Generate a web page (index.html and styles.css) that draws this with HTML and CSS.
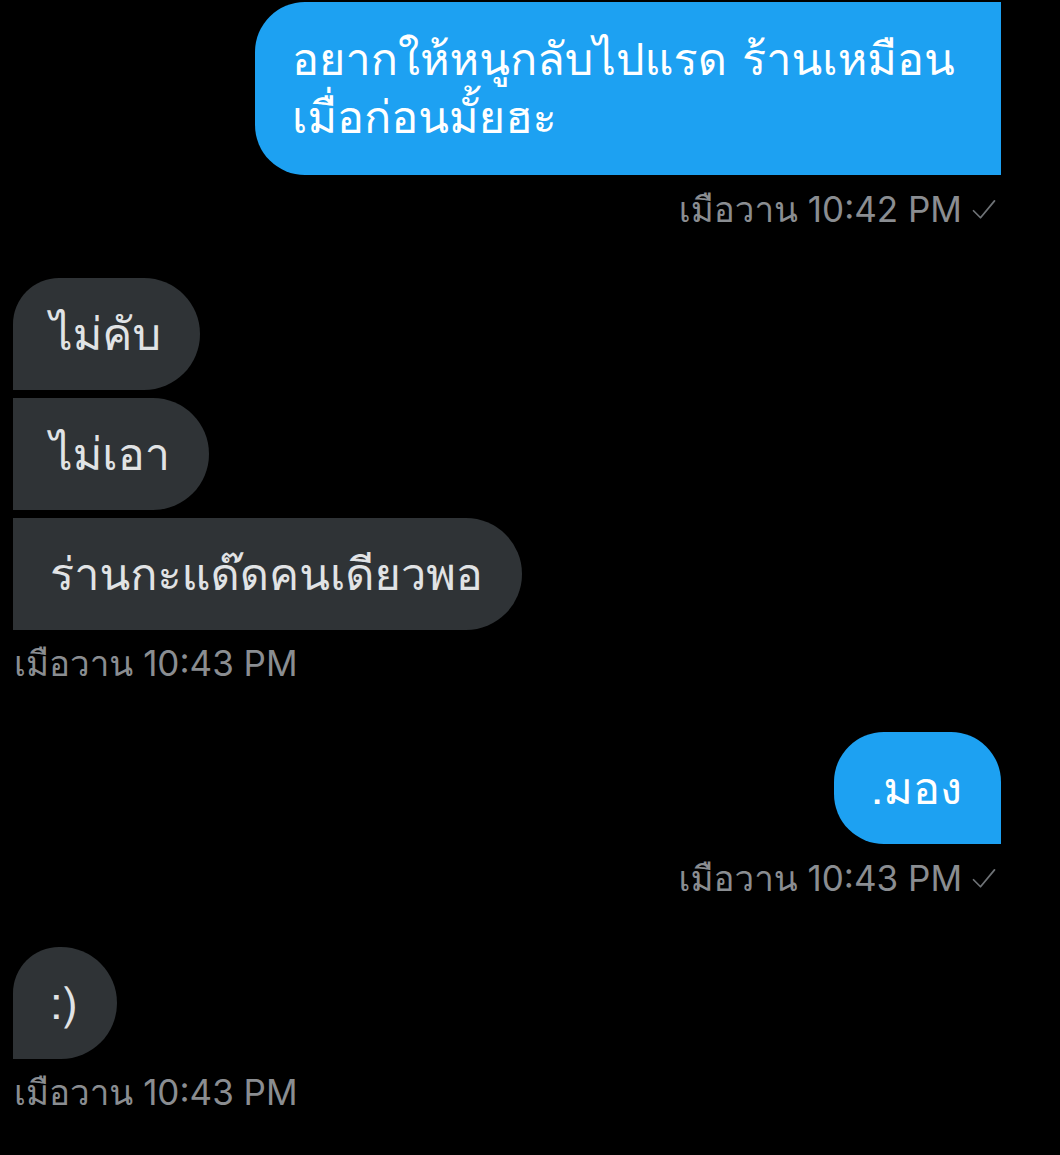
FILE: index.html
```html
<!DOCTYPE html>
<html lang="th">
<head>
    <meta charset="UTF-8">
    <meta name="viewport" content="width=device-width, initial-scale=1.0"/>
    <title>ข้อความ</title>
    <link rel="stylesheet" href="styles.css">
</head>
<body>
    <div class="chat">
        <div class="group sent">
            <div class="bubble blue first-cut">อยากให้หนูกลับไปแรด ร้านเหมือนเมื่อก่อนมั้ยฮะ</div>
            <div class="time">เมือวาน 10:42 PM
                <svg class="check" viewBox="0 0 24 24" width="28" height="28"><path d="M3 13.5l6 6L21 5" fill="none" stroke="currentColor" stroke-width="1.5" stroke-linecap="round" stroke-linejoin="round"/></svg>
            </div>
        </div>

        <div class="group received">
            <div class="bubble gray top">ไม่คับ</div>
            <div class="bubble gray">ไม่เอา</div>
            <div class="bubble gray">ร่านกะแด๊ดคนเดียวพอ</div>
            <div class="time">เมือวาน 10:43 PM</div>
        </div>

        <div class="group sent">
            <div class="bubble blue">.มอง</div>
            <div class="time">เมือวาน 10:43 PM
                <svg class="check" viewBox="0 0 24 24" width="28" height="28"><path d="M3 13.5l6 6L21 5" fill="none" stroke="currentColor" stroke-width="1.5" stroke-linecap="round" stroke-linejoin="round"/></svg>
            </div>
        </div>

        <div class="group received">
            <div class="bubble gray top">:)</div>
            <div class="time">เมือวาน 10:43 PM</div>
        </div>
    </div>
</body>
</html>
```

FILE: styles.css
```css
body { margin: 0; background: #000; font-family: "Loma", "Noto Sans Thai", sans-serif; }
.chat { padding: 2px 59px 0 13px; display: flex; flex-direction: column; gap: 50px; }
.group { display: flex; flex-direction: column; gap: 8px; }
.sent { align-items: flex-end; }
.received { align-items: flex-start; }
.bubble { font-size: 45px; line-height: 58px; padding: 27px 39px 27px 37px; max-width: 670px; }
.blue { background: #1da1f2; color: #fff; border-radius: 50px 50px 0 50px; }
.blue.first-cut { border-radius: 50px 0 0 50px; padding-top: 28px; padding-bottom: 29px; }
.gray { background: #2f3336; color: #e1e3e5; border-radius: 0 56px 56px 0; }
.gray.top { border-top-left-radius: 46px; }
.time { font-family: Inter, "Loma", sans-serif; font-size: 35px; line-height: 38px; color: #8a8d91; display: flex; align-items: center; gap: 8px; margin-top: 7px; }
.sent .time { margin-right: 3px; }
.received .time { margin-left: 1px; margin-top: 6px; }
.check { color: #6e7276; }
```
